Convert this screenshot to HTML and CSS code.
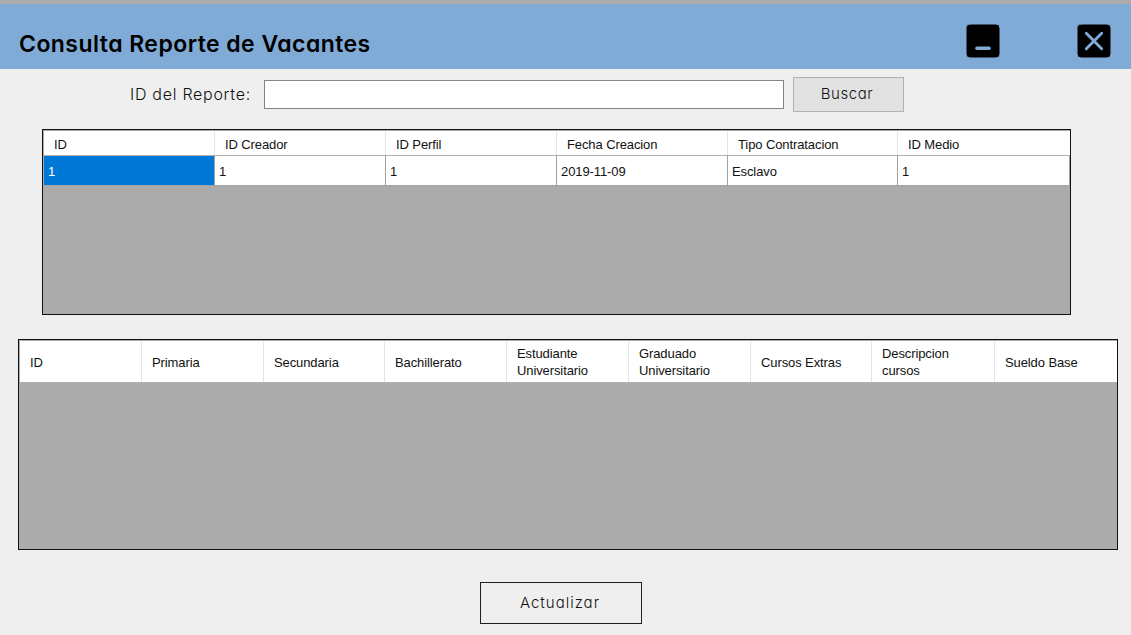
FILE: index.html
```html
<!DOCTYPE html>
<html lang="es">
<head>
<meta charset="utf-8">
<title>Consulta Reporte de Vacantes</title>
<link rel="stylesheet" href="styles.css">
</head>
<body>
<div class="window">
  <header class="titlebar">
    <h1 class="title">Consulta Reporte de Vacantes</h1>
    <div class="controls">
      <svg class="control" viewBox="0 0 34 34"><rect width="34" height="34" rx="4"/><path d="M11 24.3H23" stroke-width="3.6"/></svg>
      <svg class="control" viewBox="0 0 34 34"><rect width="34" height="34" rx="4"/><path d="M9.3 9.3L24.7 24.7M24.7 9.3L9.3 24.7" stroke-width="2.9"/></svg>
    </div>
  </header>
  <form class="search">
    <label class="label" for="report">ID del Reporte:</label>
    <input class="field" id="report" type="text">
    <button class="button find" type="button">Buscar</button>
  </form>
  <section class="grid reports">
    <div class="row head"><div>ID</div><div>ID Creador</div><div>ID Perfil</div><div>Fecha Creacion</div><div>Tipo Contratacion</div><div>ID Medio</div></div>
    <div class="row data"><div class="selected">1</div><div>1</div><div>1</div><div>2019-11-09</div><div>Esclavo</div><div>1</div></div>
  </section>
  <section class="grid profiles">
    <div class="row head"><div>ID</div><div>Primaria</div><div>Secundaria</div><div>Bachillerato</div><div>Estudiante<br>Universitario</div><div>Graduado<br>Universitario</div><div>Cursos Extras</div><div>Descripcion<br>cursos</div><div>Sueldo Base</div></div>
  </section>
  <button class="button update" type="button">Actualizar</button>
</div>
</body>
</html>
```
FILE: styles.css
```css
* { box-sizing: border-box; }
body { margin: 0; background: #efefef; }
.window {
  display: flex;
  flex-direction: column;
  width: 1131px;
  height: 635px;
  overflow: hidden;
  border-top: 4px solid #ababab;
  font-family: "Century Gothic", Inter, sans-serif;
  font-feature-settings: "cv11";
  color: #111;
}
.titlebar {
  display: flex;
  justify-content: space-between;
  height: 65px;
  padding: 20px 20px 0 19px;
  background: #80abd7;
}
.title {
  margin: 4px 0 0;
  font-size: 23px;
  line-height: 32px;
  font-weight: 600;
  letter-spacing: .45px;
  color: #000;
  white-space: nowrap;
}
.controls { display: flex; gap: 77px; }
.control { width: 34px; height: 34px; fill: #000; stroke: #80abd7; stroke-linecap: round; }
.search { display: flex; height: 60px; padding-top: 8px; }
.label {
  width: 134px;
  margin: 4px 0 0 130px;
  font-size: 16px;
  line-height: 26px;
  font-weight: 300;
  letter-spacing: .72px;
  white-space: nowrap;
}
.field { width: 520px; height: 29px; margin-top: 3px; border: 1px solid #858585; background: #fff; }
.button { font-family: inherit; font-feature-settings: inherit; font-size: 15px; font-weight: 300; color: #111; padding: 0; border-radius: 0; }
.find { width: 111px; height: 35px; margin-left: 9px; border: 1px solid #b2b2b2; background: #e1e1e1; letter-spacing: .6px; padding-right: 3px; padding-bottom: 2px; }
.grid {
  border: 1px solid #111;
  background: #ababab;
  font-family: "Microsoft Sans Serif", "Liberation Sans", sans-serif;
  font-size: 13px;
  line-height: 17px;
  letter-spacing: -.1px;
}
.reports { width: 1029px; height: 186px; margin-left: 42px; padding: 1px 0 0 1px; }
.profiles { width: 1100px; height: 211px; margin: 24px 0 0 18px; padding: 1px 0 0 1px; }
.row { display: grid; background: #fff; }
.reports .row { grid-template-columns: 171px 171px 171px 171px 170px 1fr; }
.profiles .row { grid-template-columns: 122px 122px 121px 122px 122px 122px 121px 123px 1fr; height: 42px; }
.row > div { display: flex; align-items: center; padding-top: 1px; border-right: 1px solid #e5e5e5; white-space: nowrap; }
.head > div { padding-left: 10px; }
.head { border-bottom: 1px solid #b0b0b0; }
.head > div:last-child { border-right: 0; }
.reports .head { height: 25px; }
.reports .head > div { padding-top: 2px; }
.data { height: 30px; border-bottom: 1px solid #a4a4a4; }
.row.data > div { padding-top: 2px; padding-left: 4px; border-color: #a0a0a0; }
.data .selected { background: #0078d7; color: #fff; }
.update { width: 162px; height: 42px; margin: 32px 0 0 480px; border: 1px solid #202020; background: #efefef; letter-spacing: 1px; padding-right: 2px; padding-bottom: 2px; }
```
